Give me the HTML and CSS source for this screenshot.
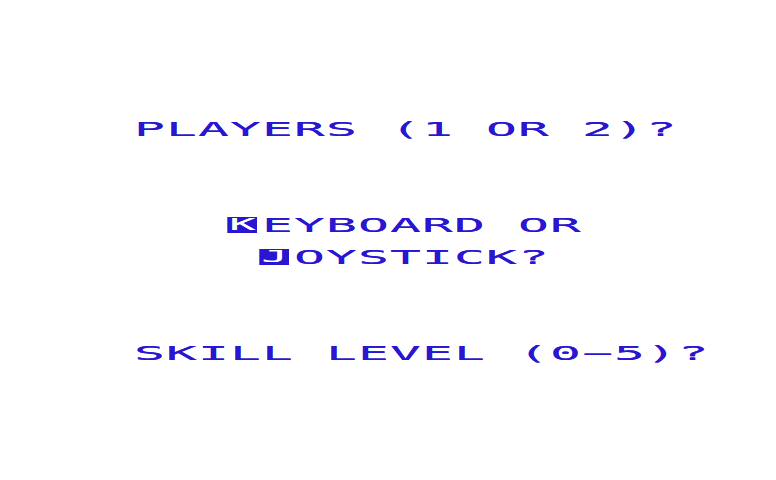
FILE: index.html
```html
<!DOCTYPE html>
<html lang="en">
<head>
    <meta charset="UTF-8">
    <title>Game Setup</title>
    <link rel="stylesheet" href="styles.css">
</head>
<body>
    <div class="screen">
        <div class="row col-0 gap-top-0"><span class="txt">PLAYERS (1 OR 2)?</span></div>
        <div class="row col-3 gap-top-5"><span class="txt"><span class="inv">K</span>EYBOARD OR</span></div>
        <div class="row col-4 gap-top-1"><span class="txt"><span class="inv">J</span>OYSTICK?</span></div>
        <div class="row col-0 gap-top-5"><span class="txt">SKILL LEVEL (0&#8722;5)?</span></div>
    </div>
</body>
</html>
```

FILE: styles.css
```css
/* text screen: cells are 32px wide, 16px tall */
:root {
    --ink: #2a16d0;
    --paper: #ffffff;
    --cell-w: 32px;
    --cell-h: 16px;
}
* { margin: 0; padding: 0; box-sizing: border-box; }
body { background: var(--paper); overflow: hidden; }

.screen { width: 776px; height: 480px; padding-top: 121px; background: var(--paper); }

.row { height: var(--cell-h); line-height: var(--cell-h); white-space: pre; color: var(--ink); font-family: "DejaVu Sans Mono", monospace; font-size: 19px; }

/* column offsets on the character grid */
.col-0 { padding-left: 134px; }
.col-3 { padding-left: calc(134px + 3 * var(--cell-w)); }
.col-4 { padding-left: calc(134px + 4 * var(--cell-w)); }

/* blank rows between lines */
.gap-top-0 { margin-top: 0; }
.gap-top-1 { margin-top: var(--cell-h); }
.gap-top-5 { margin-top: calc(5 * var(--cell-h)); }

/* wide, flat glyphs like the old TV text mode; the shadow fattens the flat bars */
.txt { display: inline-block; letter-spacing: 0.41px; transform: scaleX(2.7); transform-origin: 0 50%; text-shadow: 0 0.4px 0 var(--ink); }

/* reverse-video key letter; sizes are before the 2.7x stretch */
.inv { display: inline-block; width: 11.5px; margin-left: -1.1px; margin-right: 1.45px; height: var(--cell-h); line-height: var(--cell-h); vertical-align: top; text-align: center; letter-spacing: 0; font-size: 16px; background: var(--ink); color: var(--paper); text-shadow: 0 0.4px 0 var(--paper); }
```
